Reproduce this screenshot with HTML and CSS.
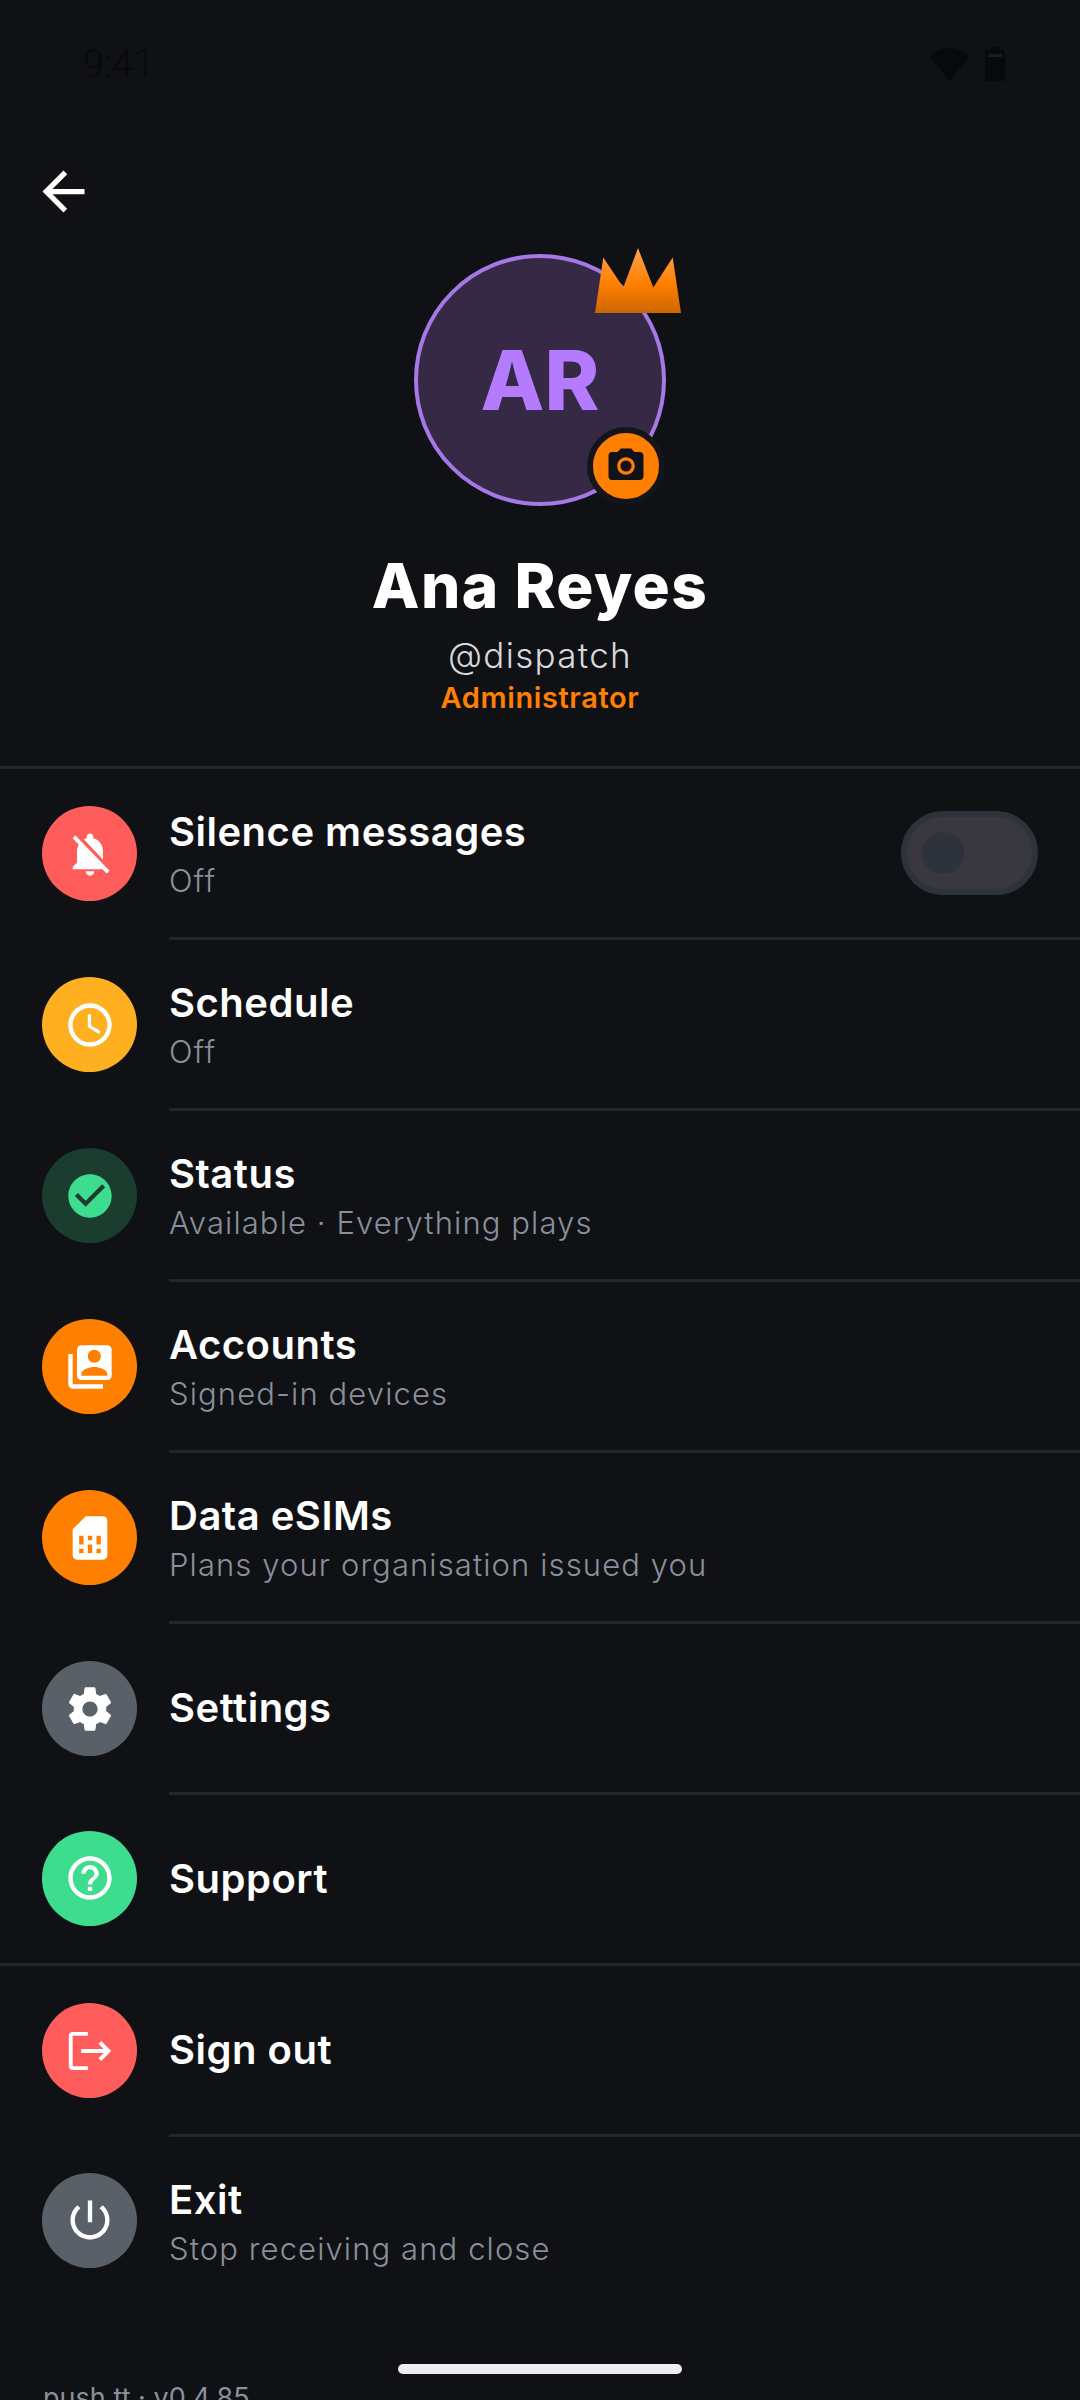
FILE: index.html
```html
<!DOCTYPE html>
<html lang="en">
<head>
  <meta charset="UTF-8" />
  <meta name="viewport" content="width=device-width, initial-scale=1.0" />
  <title>Profile</title>
  <link rel="stylesheet" href="styles.css">
</head>
<body>

  <header class="status-bar">
    <span class="status-time">9:41</span>
    <div class="status-icons">
      <svg class="status-wifi" viewBox="0 0 39 33"><path d="M19.5 33L39 9C34 3 27 0 19.5 0S5 3 0 9z"/></svg>
      <svg class="status-battery" viewBox="0 0 20 34"><path d="M6 0h8v3h4c1.100 0 2 .9 2 2v27c0 1.100-.9 2-2 2H2c-1.100 0-2-.9-2-2V5c0-1.100.9-2 2-2h4z"/><rect class="battery-notch" x="3" y="7" width="14" height="3"/></svg>
    </div>
  </header>

  <button class="back-btn">
    <svg viewBox="0 0 24 24"><path d="M20 11H7.830l5.590-5.590L12 4l-8 8 8 8 1.410-1.410L7.830 13H20v-2z"/></svg>
  </button>

  <section class="profile">
    <div class="avatar">
      <span class="avatar-initials">AR</span>
      <svg class="crown" viewBox="0 0 86 65">
        <defs>
          <linearGradient id="crownFill" x1="0" y1="0" x2="0" y2="1">
            <stop offset="0" stop-color="#ffa24d"/>
            <stop offset="0.55" stop-color="#ff8000"/>
            <stop offset="1" stop-color="#cc6600"/>
          </linearGradient>
        </defs>
        <path fill="url(#crownFill)" d="M0 65L8.300 9.500 28.300 39.500 43 0 58.300 39.500 77.700 9.500 86 65z"/>
      </svg>
      <div class="camera-badge">
        <svg viewBox="0 0 24 24"><path d="M9 2L7.170 4H4c-1.100 0-2 .9-2 2v12c0 1.100.9 2 2 2h16c1.100 0 2-.9 2-2V6c0-1.100-.9-2-2-2h-3.170L15 2H9zm3 15c-2.760 0-5-2.240-5-5s2.240-5 5-5 5 2.240 5 5-2.240 5-5 5z"/><circle cx="12" cy="12" r="3.200"/></svg>
      </div>
    </div>
    <h1 class="profile-name">Ana Reyes</h1>
    <div class="profile-handle">@dispatch</div>
    <div class="profile-role">Administrator</div>
  </section>

  <div class="group">
    <div class="row">
      <div class="row-icon bg-red">
        <svg viewBox="0 0 24 24"><path d="M20 18.690L7.840 6.140 5.270 3.490 4 4.760l2.800 2.800v.01c-.52.99-.8 2.160-.8 3.420v5l-2 2v1h13.730l2 2L21 19.720l-1-1.030zM12 22c1.110 0 2-.89 2-2h-4c0 1.110.89 2 2 2zm6-7.320V11c0-3.080-1.640-5.640-4.500-6.320V4c0-.83-.67-1.500-1.500-1.500s-1.500.67-1.500 1.500v.68c-.15.03-.29.08-.42.12-.1.03-.2.07-.3.11h-.01c-.2.08-.4.17-.59.27-.01 0-.01 0-.02.01L18 14.680z"/></svg>
      </div>
      <div class="row-body">
        <div class="row-text">
          <div class="row-title">Silence messages</div>
          <div class="row-sub">Off</div>
        </div>
        <div class="toggle"><span class="toggle-knob"></span></div>
      </div>
    </div>

    <div class="row">
      <div class="row-icon bg-amber">
        <svg viewBox="0 0 24 24"><path d="M11.990 2C6.470 2 2 6.480 2 12s4.470 10 9.990 10C17.520 22 22 17.520 22 12S17.520 2 11.990 2zM12 20c-4.420 0-8-3.580-8-8s3.580-8 8-8 8 3.580 8 8-3.580 8-8 8zm.5-13H11v6l5.250 3.150.75-1.230-4.500-2.670z"/></svg>
      </div>
      <div class="row-body">
        <div class="row-text">
          <div class="row-title">Schedule</div>
          <div class="row-sub">Off</div>
        </div>
      </div>
    </div>

    <div class="row">
      <div class="row-icon bg-darkgreen">
        <svg class="icon-green" viewBox="0 0 24 24"><path d="M12 2C6.480 2 2 6.480 2 12s4.480 10 10 10 10-4.480 10-10S17.520 2 12 2zm-2 15l-5-5 1.410-1.410L10 14.170l7.590-7.590L19 8l-9 9z"/></svg>
      </div>
      <div class="row-body">
        <div class="row-text">
          <div class="row-title">Status</div>
          <div class="row-sub">Available · Everything plays</div>
        </div>
      </div>
    </div>

    <div class="row">
      <div class="row-icon bg-orange">
        <svg viewBox="0 0 24 24"><path fill-rule="evenodd" d="M4 6H2v14c0 1.100.9 2 2 2h14v-2H4V6zm16-4H8c-1.100 0-2 .9-2 2v12c0 1.100.9 2 2 2h12c1.100 0 2-.9 2-2V4c0-1.100-.9-2-2-2zm-6 2c1.660 0 3 1.340 3 3s-1.340 3-3 3-3-1.340-3-3 1.340-3 3-3zm-6 12v-.8c0-2 4-3.200 6-3.200s6 1.200 6 3.200v.8H8z"/></svg>
      </div>
      <div class="row-body">
        <div class="row-text">
          <div class="row-title">Accounts</div>
          <div class="row-sub">Signed-in devices</div>
        </div>
      </div>
    </div>

    <div class="row">
      <div class="row-icon bg-orange">
        <svg viewBox="0 0 24 24"><path d="M19.990 4c0-1.100-.89-2-1.990-2h-8L4 8v12c0 1.100.9 2 2 2h12c1.100 0 2-.9 2-2l-.01-16zM9 19H7v-2h2v2zm8 0h-2v-2h2v2zm-8-4H7v-4h2v4zm4 4h-2v-4h2v4zm0-6h-2v-2h2v2zm4 2h-2v-4h2v4z"/></svg>
      </div>
      <div class="row-body">
        <div class="row-text">
          <div class="row-title">Data eSIMs</div>
          <div class="row-sub">Plans your organisation issued you</div>
        </div>
      </div>
    </div>

    <div class="row">
      <div class="row-icon bg-gray">
        <svg viewBox="0 0 24 24"><path d="M19.430 12.980c.04-.32.07-.64.07-.98s-.03-.66-.07-.98l2.110-1.650c.19-.15.24-.42.12-.64l-2-3.460c-.12-.22-.39-.3-.61-.22l-2.490 1c-.52-.4-1.080-.73-1.690-.98l-.38-2.650C14.460 2.180 14.250 2 14 2h-4c-.25 0-.46.18-.49.42l-.38 2.650c-.61.25-1.170.59-1.690.98l-2.490-1c-.23-.09-.49 0-.61.22l-2 3.460c-.13.22-.07.49.12.64l2.110 1.650c-.04.32-.07.65-.07.98s.03.66.07.98l-2.110 1.650c-.19.15-.24.42-.12.64l2 3.460c.12.22.39.3.61.22l2.490-1c.52.4 1.080.73 1.690.98l.38 2.650c.03.24.24.42.49.42h4c.25 0 .46-.18.49-.42l.38-2.650c.61-.25 1.170-.59 1.690-.98l2.490 1c.23.09.49 0 .61-.22l2-3.460c.12-.22.07-.49-.12-.64l-2.110-1.650zM12 15.500c-1.930 0-3.500-1.570-3.500-3.500s1.570-3.500 3.500-3.500 3.500 1.570 3.500 3.500-1.570 3.500-3.500 3.500z"/></svg>
      </div>
      <div class="row-body">
        <div class="row-text">
          <div class="row-title">Settings</div>
        </div>
      </div>
    </div>

    <div class="row">
      <div class="row-icon bg-green">
        <svg viewBox="0 0 24 24"><path d="M11 18h2v-2h-2v2zm1-16C6.480 2 2 6.480 2 12s4.480 10 10 10 10-4.480 10-10S17.520 2 12 2zm0 18c-4.410 0-8-3.590-8-8s3.590-8 8-8 8 3.590 8 8-3.590 8-8 8zm0-14c-2.210 0-4 1.790-4 4h2c0-1.100.9-2 2-2s2 .9 2 2c0 2-3 1.750-3 5h2c0-2.250 3-2.500 3-5 0-2.210-1.790-4-4-4z"/></svg>
      </div>
      <div class="row-body">
        <div class="row-text">
          <div class="row-title">Support</div>
        </div>
      </div>
    </div>
  </div>

  <div class="group">
    <div class="row">
      <div class="row-icon bg-red">
        <svg viewBox="0 0 24 24"><path d="M4 5h7V3.200H4c-1 0-1.800.8-1.800 1.800v14c0 1 .8 1.800 1.800 1.800h7V19H4V5zm17.800 7l-4.600-4.600-1.300 1.300 2.400 2.400H7.900v1.800h10.400l-2.400 2.400 1.300 1.300 4.600-4.600z"/></svg>
      </div>
      <div class="row-body">
        <div class="row-text">
          <div class="row-title">Sign out</div>
        </div>
      </div>
    </div>

    <div class="row">
      <div class="row-icon bg-gray">
        <svg viewBox="0 0 24 24"><path d="M13 3h-2v10h2V3zm4.830 2.170l-1.420 1.420C17.990 7.860 19 9.810 19 12c0 3.870-3.130 7-7 7s-7-3.130-7-7c0-2.190 1.010-4.140 2.580-5.420L6.170 5.170C4.230 6.820 3 9.260 3 12c0 4.970 4.030 9 9 9s9-4.030 9-9c0-2.740-1.230-5.180-3.170-6.830z"/></svg>
      </div>
      <div class="row-body">
        <div class="row-text">
          <div class="row-title">Exit</div>
          <div class="row-sub">Stop receiving and close</div>
        </div>
      </div>
    </div>
  </div>

  <footer class="version">push.tt · v0.4.85</footer>
  <div class="home-bar"></div>

</body>
</html>
```

FILE: styles.css
```css
html, body {
  margin: 0;
  height: 2400px;
  overflow: hidden;
}

body {
  background-color: #0f1115;
  color: #fff;
  font-family: Inter, "Noto Sans", sans-serif;
  position: relative;
}

.status-bar {
  height: 128px;
  padding: 0 75px 0 83px;
  box-sizing: border-box;
  display: flex;
  align-items: center;
  justify-content: space-between;
}

.status-time {
  font-family: Roboto, sans-serif;
  font-weight: 300;
  font-size: 38px;
  color: #08090b;
}

.status-icons {
  display: flex;
  align-items: center;
  gap: 16px;
}

.status-icons svg {
  display: block;
  fill: #08090b;
}

.status-wifi {
  width: 39px;
  height: 33px;
}

.status-battery {
  width: 20px;
  height: 34px;
}

.battery-notch {
  fill: #1b1d21;
}

.back-btn {
  display: block;
  width: 63px;
  height: 63px;
  margin: 32px 0 0 32px;
  padding: 0;
  border: 0;
  background: none;
}

.back-btn svg {
  display: block;
  fill: #fff;
}

.profile {
  margin-top: 31px;
  display: flex;
  flex-direction: column;
  align-items: center;
  height: 512px;
}

.avatar {
  position: relative;
  width: 252px;
  height: 252px;
  box-sizing: border-box;
  border: 4px solid #a678e6;
  border-radius: 50%;
  background-color: #352945;
  display: flex;
  align-items: center;
  justify-content: center;
}

.avatar-initials {
  font-size: 83px;
  font-weight: 800;
  color: #b57bff;
}

.crown {
  position: absolute;
  top: -10px;
  left: 177px;
  width: 86px;
  height: 65px;
}

.camera-badge {
  position: absolute;
  top: 169px;
  left: 169px;
  width: 66px;
  height: 66px;
  border: 6px solid #14151a;
  border-radius: 50%;
  background-color: #ff8000;
  display: flex;
  align-items: center;
  justify-content: center;
}

.camera-badge svg {
  width: 42px;
  height: 42px;
  fill: #101218;
}

.profile-name {
  margin: 44px 0 0;
  font-size: 62px;
  line-height: 72px;
  font-weight: 800;
  letter-spacing: 1.4px;
}

.profile-handle {
  margin-top: 12px;
  font-size: 35px;
  line-height: 42px;
  font-weight: 300;
  letter-spacing: 1.3px;
  color: #d8d9dd;
}

.profile-role {
  margin-top: 4px;
  font-size: 29px;
  line-height: 36px;
  font-weight: 600;
  letter-spacing: 0.6px;
  color: #ff8000;
}

.group {
  border-top: 3px solid #25262d;
}

.row {
  display: flex;
  align-items: center;
  padding-left: 42px;
  height: 171px;
}

.row:last-child {
  height: 168px;
}

.row-icon {
  flex: none;
  width: 95px;
  height: 95px;
  margin-bottom: 2px;
  border-radius: 50%;
  display: flex;
  align-items: center;
  justify-content: center;
}

.row-icon svg {
  width: 52px;
  height: 52px;
  fill: #fff;
}

.row-icon .icon-green {
  fill: #3ddc8f;
}

.bg-red { background-color: #ff5c5c; }
.bg-amber { background-color: #ffb020; }
.bg-darkgreen { background-color: #1a3d30; }
.bg-orange { background-color: #ff8000; }
.bg-gray { background-color: #5a6068; }
.bg-green { background-color: #3ddc8f; }

.row-body {
  flex: 1;
  align-self: stretch;
  margin-left: 32px;
  padding-right: 42px;
  display: flex;
  align-items: center;
  justify-content: space-between;
  border-bottom: 3px solid #25262d;
}

.row:last-child .row-body {
  border-bottom: 0;
}

.row-title {
  font-size: 40px;
  line-height: 50px;
  font-weight: 600;
  letter-spacing: 0.5px;
}

.row-sub {
  margin: 3px 0 -3px;
  font-size: 31px;
  line-height: 42px;
  font-weight: 300;
  letter-spacing: 1.1px;
  color: #8a909b;
}

.toggle {
  width: 110px;
  height: 72px;
  padding-left: 15px;
  border: 6px solid #2e333b;
  border-radius: 42px;
  background-color: #38383e;
  display: flex;
  align-items: center;
}

.toggle-knob {
  width: 42px;
  height: 42px;
  border-radius: 50%;
  background-color: #2e333b;
}

.version {
  position: absolute;
  top: 2381px;
  left: 43px;
  font-size: 27px;
  line-height: 34px;
  color: #8a909b;
}

.home-bar {
  position: absolute;
  top: 2364px;
  left: 398px;
  width: 284px;
  height: 10px;
  border-radius: 5px;
  background-color: #eee;
}
```
